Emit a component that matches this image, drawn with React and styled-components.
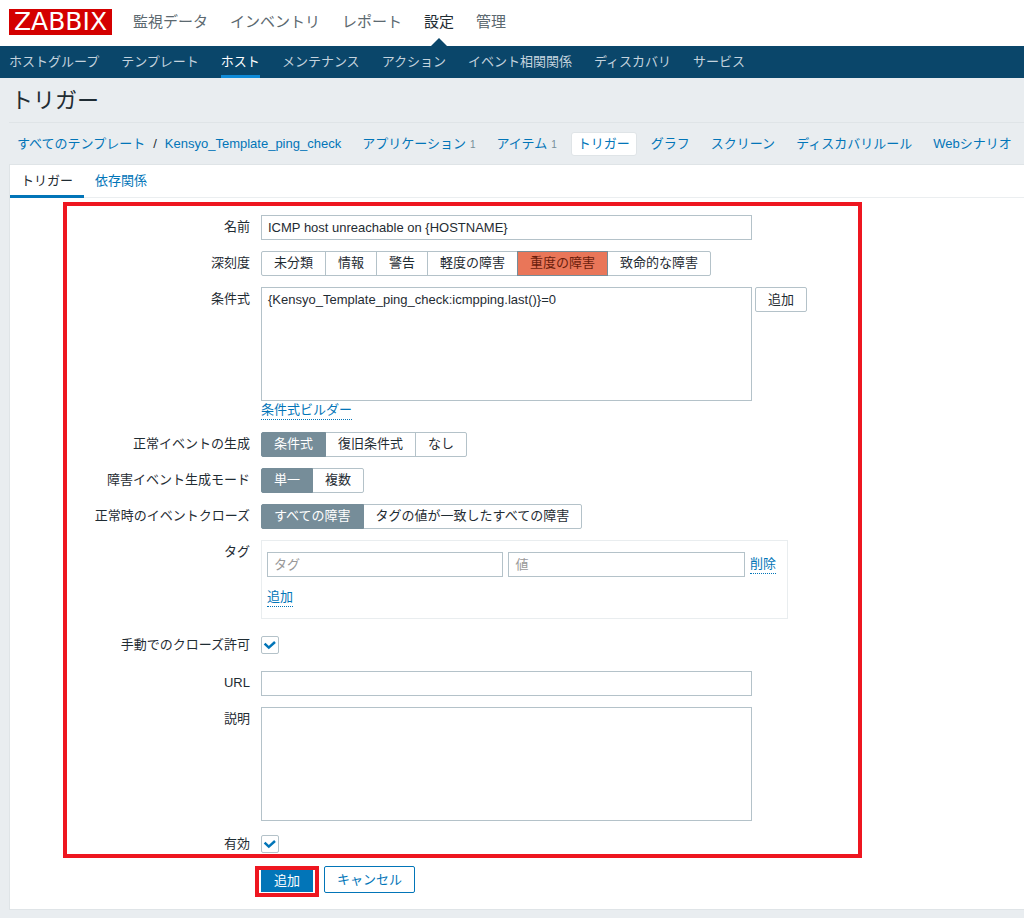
import React from 'react';
import styled, { createGlobalStyle, css } from 'styled-components';

const GlobalStyle = createGlobalStyle`
  * {
    box-sizing: border-box;
  }
  body {
    margin: 0;
    background: #e9edf0;
    color: #1f2c33;
    font-family: 'Liberation Sans', 'Noto Sans CJK JP', sans-serif;
    font-size: 13px;
    line-height: 18px;
  }
  a {
    text-decoration: none;
  }
  button, input, textarea {
    color: inherit;
    font: inherit;
  }
`;

const Header = styled.header`
  display: flex;
  align-items: center;
  height: 46px;
  padding: 0 9px;
  background: #fff;
`;

const Logo = styled.a`
  width: 103px;
  height: 26px;
  margin: 0 21px 2px 0;
  background: #d40000;
  color: #fff;
  font-family: 'DejaVu Sans', sans-serif;
  font-size: 25px;
  line-height: 26px;
  text-align: center;
`;

const MainNav = styled.nav`
  display: flex;
  gap: 22px;
  height: 100%;
`;

const MainLink = styled.a`
  position: relative;
  color: ${({ $active }) => ($active ? '#1f2c33' : '#5c6970')};
  font-size: 15px;
  line-height: 43px;
  ${({ $active }) =>
    $active &&
    css`
      &::after {
        content: '';
        position: absolute;
        bottom: 0;
        left: 50%;
        margin-left: -8px;
        border: 8px solid transparent;
        border-top: 0;
        border-bottom-color: #0a466a;
      }
    `}
`;

const SubNav = styled.nav`
  display: flex;
  gap: 22px;
  height: 32px;
  padding: 0 9px;
  background: #0a466a;
`;

const SubLink = styled.a`
  border-bottom: 3px solid ${({ $active }) => ($active ? '#0f8bd8' : 'transparent')};
  color: ${({ $active }) => ($active ? '#fff' : '#c4d3de')};
  line-height: 32px;
  white-space: nowrap;
`;

const Title = styled.h1`
  height: 45px;
  margin: 0 0 0 9px;
  padding-left: 2px;
  border-bottom: 1px solid #dfe4e7;
  font-size: 22px;
  font-weight: 400;
  line-height: 46px;
`;

const Breadcrumbs = styled.nav`
  display: flex;
  align-items: center;
  gap: 7px;
  height: 41px;
  padding-left: 10px;
  white-space: nowrap;
`;

const Crumb = styled.a`
  height: 24px;
  padding: 0 6px;
  border: 1px solid ${({ $active }) => ($active ? '#dfe4e7' : 'transparent')};
  border-radius: 3px;
  background: ${({ $active }) => ($active ? '#fff' : 'transparent')};
  color: #0275b8;
  line-height: 22px;
  sup {
    margin-left: 4px;
    color: #768d99;
    font-size: 10px;
    line-height: 10px;
    vertical-align: baseline;
  }
`;

const CrumbPath = styled.div`
  display: flex;
  align-items: center;
  gap: 1px;
`;

const Panel = styled.main`
  margin: 0 0 8px 9px;
  padding-bottom: 12px;
  border: 1px solid #dfe4e7;
  border-right: 0;
  background: #fff;
`;

const Tabs = styled.div`
  display: flex;
  height: 33px;
  border-bottom: 1px solid #ebeef0;
`;

const Tab = styled.button`
  height: 33px;
  padding: 2px 11px 0;
  border: 0;
  border-bottom: 3px solid ${({ $active }) => ($active ? '#0275b8' : 'transparent')};
  background: none;
  color: ${({ $active }) => ($active ? '#1f2c33' : '#0275b8')};
`;

const FieldFrame = styled.div`
  display: flex;
  flex-direction: column;
  gap: 11px;
  max-width: 799px;
  margin: 4px 0 0 53px;
  padding-top: 9px;
  border: 4px solid #ee1620;
`;

const FormRow = styled.div`
  display: grid;
  grid-template-columns: 183px minmax(0, 1fr);
  column-gap: 11px;
`;

const RowLabel = styled.label`
  line-height: 24px;
  text-align: right;
`;

const TextInput = styled.input`
  display: block;
  width: 100%;
  max-width: 491px;
  height: 25px;
  padding: 0 6px;
  border: 1px solid #b4c2c9;
  background: #fff;
  &::placeholder {
    color: #999;
  }
`;

const TextArea = styled.textarea`
  display: block;
  flex: 0 1 491px;
  width: 100%;
  max-width: 491px;
  height: 114px;
  padding: 4px 6px;
  border: 1px solid #b4c2c9;
  background: #fff;
  line-height: 16px;
  resize: none;
`;

const Expression = styled.div`
  display: flex;
  align-items: flex-start;
  gap: 3px;
`;

const Button = styled.button`
  flex: none;
  height: ${({ $tall }) => ($tall ? '27px' : '25px')};
  padding: 0 12px;
  border: 1px solid ${({ $tall }) => ($tall ? '#0275b8' : '#b4c2c9')};
  border-radius: 2px;
  background: #fff;
  color: ${({ $tall }) => ($tall ? '#0275b8' : '#1f2c33')};
  line-height: 22px;
`;

const LinkLine = styled.div`
  height: 20px;
`;

const ActionLink = styled.a`
  display: inline-block;
  border-bottom: 1px dotted #0275b8;
  color: #0275b8;
`;

const SegmentGroup = styled.div`
  display: flex;
`;

const Segment = styled.label`
  position: relative;
  height: 25px;
  padding: 0 12px;
  border: 1px solid #b4c2c9;
  line-height: 22px;
  white-space: nowrap;
  & + & {
    margin-left: -1px;
  }
  &:first-child {
    border-radius: 2px 0 0 2px;
  }
  &:last-child {
    border-radius: 0 2px 2px 0;
  }
  &:has(input:checked) {
    z-index: 1;
    border-color: #768d99;
    background: ${({ $severity }) => ($severity ? '#e97659' : '#768d99')};
    color: ${({ $severity }) => ($severity ? '#6b1d0c' : '#fff')};
  }
  input {
    position: absolute;
    inset: 0;
    margin: 0;
    opacity: 0;
  }
`;

const TagBox = styled.div`
  max-width: 527px;
  height: 79px;
  padding: 11px 11px 0 5px;
  border: 1px solid #e9edef;
`;

const TagLine = styled.div`
  display: flex;
  align-items: center;
  gap: 5px;
  margin-bottom: 11px;
  ${ActionLink} {
    flex: none;
  }
`;

const CheckWrap = styled.span`
  position: relative;
  align-self: center;
  width: 18px;
  height: 18px;
  input {
    display: block;
    width: 18px;
    height: 18px;
    margin: 0;
    border: 1px solid #b4c2c9;
    border-radius: 2px;
    background: #fff;
    appearance: none;
  }
  svg {
    position: absolute;
    inset: 0;
    visibility: hidden;
    pointer-events: none;
  }
  input:checked + svg {
    visibility: visible;
  }
`;

const CheckRow = styled(FormRow)`
  height: ${({ $spaced }) => ($spaced ? '30px' : '22px')};
  align-items: center;
`;

const Footer = styled.div`
  display: flex;
  align-items: flex-start;
  gap: 5px;
  margin: 8px 0 0 245px;
`;

const SubmitFrame = styled.div`
  padding: 0 2px 1px;
  border: 4px solid #ee1620;
`;

const SubmitButton = styled.button`
  display: block;
  height: 22px;
  padding: 0 13px;
  border: 0;
  background: #0275b8;
  color: #fff;
  line-height: 20px;
`;

const mainMenu = ['監視データ', 'インベントリ', 'レポート', '設定', '管理'];
const subMenu = [
  'ホストグループ',
  'テンプレート',
  'ホスト',
  'メンテナンス',
  'アクション',
  'イベント相関関係',
  'ディスカバリ',
  'サービス',
];
const sections = [
  { name: 'アプリケーション', count: 1 },
  { name: 'アイテム', count: 1 },
  { name: 'トリガー' },
  { name: 'グラフ' },
  { name: 'スクリーン' },
  { name: 'ディスカバリルール' },
  { name: 'Webシナリオ' },
];

function Segments({ id, label, options, selected, severity }) {
  return (
    <FormRow role="radiogroup" aria-labelledby={id}>
      <RowLabel as="span" id={id}>
        {label}
      </RowLabel>
      <SegmentGroup>
        {options.map((option) => (
          <Segment key={option} $severity={severity}>
            <input type="radio" name={id} defaultChecked={option === selected} />
            {option}
          </Segment>
        ))}
      </SegmentGroup>
    </FormRow>
  );
}

function CheckField({ id, label, spaced }) {
  return (
    <CheckRow $spaced={spaced}>
      <RowLabel htmlFor={id}>{label}</RowLabel>
      <CheckWrap>
        <input type="checkbox" id={id} defaultChecked />
        <svg width="18" height="18" viewBox="0 0 18 18" fill="none">
          <path d="M3.6 7.6 L7.8 11.6 L14 6" stroke="#0275b8" strokeWidth="2.5" />
        </svg>
      </CheckWrap>
    </CheckRow>
  );
}

export default function App() {
  return (
    <>
      <GlobalStyle />
      <Header>
        <Logo href="#">ZABBIX</Logo>
        <MainNav>
          {mainMenu.map((name) => (
            <MainLink key={name} href="#" $active={name === '設定'}>
              {name}
            </MainLink>
          ))}
        </MainNav>
      </Header>
      <SubNav>
        {subMenu.map((name) => (
          <SubLink key={name} href="#" $active={name === 'ホスト'}>
            {name}
          </SubLink>
        ))}
      </SubNav>
      <Title>トリガー</Title>
      <Breadcrumbs>
        <CrumbPath>
          <Crumb href="#">すべてのテンプレート</Crumb>/
          <Crumb href="#">Kensyo_Template_ping_check</Crumb>
        </CrumbPath>
        {sections.map(({ name, count }) => (
          <Crumb key={name} href="#" $active={name === 'トリガー'}>
            {name}
            {count && <sup>{count}</sup>}
          </Crumb>
        ))}
      </Breadcrumbs>
      <Panel>
        <Tabs role="tablist">
          <Tab type="button" role="tab" aria-selected="true" $active>
            トリガー
          </Tab>
          <Tab type="button" role="tab" aria-selected="false">
            依存関係
          </Tab>
        </Tabs>
        <form onSubmit={(e) => e.preventDefault()}>
          <FieldFrame>
            <FormRow>
              <RowLabel htmlFor="name">名前</RowLabel>
              <TextInput id="name" defaultValue="ICMP host unreachable on {HOSTNAME}" />
            </FormRow>
            <Segments
              id="severity"
              label="深刻度"
              options={['未分類', '情報', '警告', '軽度の障害', '重度の障害', '致命的な障害']}
              selected="重度の障害"
              severity
            />
            <FormRow>
              <RowLabel htmlFor="expression">条件式</RowLabel>
              <div>
                <Expression>
                  <TextArea
                    id="expression"
                    defaultValue="{Kensyo_Template_ping_check:icmpping.last()}=0"
                  />
                  <Button type="button">追加</Button>
                </Expression>
                <LinkLine>
                  <ActionLink href="#">条件式ビルダー</ActionLink>
                </LinkLine>
              </div>
            </FormRow>
            <Segments
              id="recovery"
              label="正常イベントの生成"
              options={['条件式', '復旧条件式', 'なし']}
              selected="条件式"
            />
            <Segments
              id="mode"
              label="障害イベント生成モード"
              options={['単一', '複数']}
              selected="単一"
            />
            <Segments
              id="close"
              label="正常時のイベントクローズ"
              options={['すべての障害', 'タグの値が一致したすべての障害']}
              selected="すべての障害"
            />
            <FormRow>
              <RowLabel htmlFor="tag">タグ</RowLabel>
              <TagBox>
                <TagLine>
                  <TextInput id="tag" placeholder="タグ" />
                  <TextInput placeholder="値" aria-label="値" />
                  <ActionLink href="#">削除</ActionLink>
                </TagLine>
                <ActionLink href="#">追加</ActionLink>
              </TagBox>
            </FormRow>
            <CheckField id="manual" label="手動でのクローズ許可" spaced />
            <FormRow>
              <RowLabel htmlFor="url">URL</RowLabel>
              <TextInput id="url" />
            </FormRow>
            <FormRow>
              <RowLabel htmlFor="description">説明</RowLabel>
              <TextArea id="description" />
            </FormRow>
            <CheckField id="enabled" label="有効" />
          </FieldFrame>
          <Footer>
            <SubmitFrame>
              <SubmitButton type="submit">追加</SubmitButton>
            </SubmitFrame>
            <Button type="button" $tall>
              キャンセル
            </Button>
          </Footer>
        </form>
      </Panel>
    </>
  );
}
